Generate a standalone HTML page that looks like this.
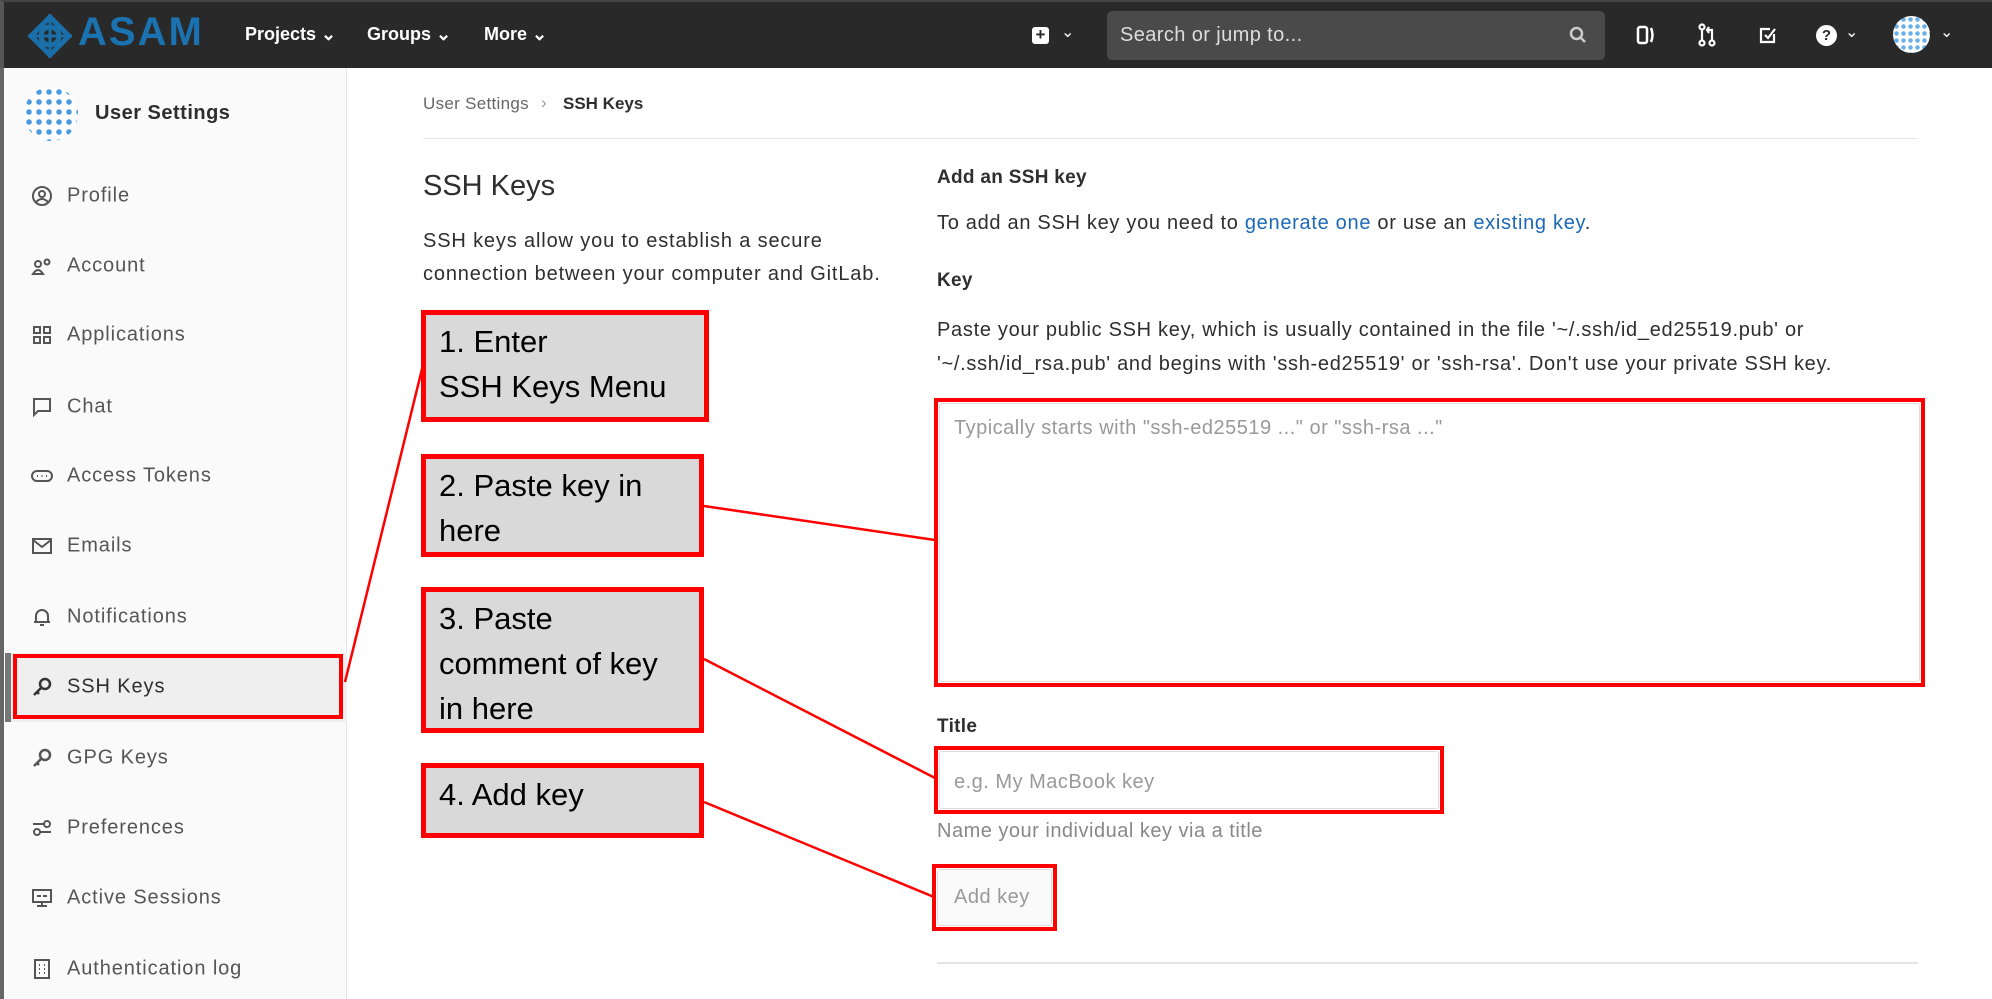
<!DOCTYPE html>
<html><head><meta charset="utf-8"><style>
*{margin:0;padding:0;box-sizing:border-box}
body{width:1992px;height:999px;position:relative;overflow:hidden;background:#fff;font-family:"Liberation Sans",sans-serif;color:#2e2e2e}
.a{position:absolute;white-space:nowrap}
.hdr{position:absolute;left:0;top:0;width:1992px;height:68px;background:#292929;border-left:4px solid #555;border-top:2px solid #444}
.nav{color:#fff;font-size:18px;font-weight:bold;top:24px}
.side{position:absolute;left:0;top:68px;width:347px;height:931px;background:#fafafa;border-right:1px solid #e5e5e5;border-left:4px solid #666}
.it{position:absolute;left:67px;font-size:20px;letter-spacing:0.9px;color:#555;transform:translateY(-50%)}
.ic{position:absolute;left:31px;width:22px;height:22px;transform:translateY(-50%)}
.rb{position:absolute;border:4px solid #f00}
.ann{position:absolute;background:#d9d9d9;border:5px solid #f00;font-size:31px;color:#000;line-height:45px;padding:4px 0 0 13px}
.lab{font-size:19px;font-weight:bold;color:#2e2e2e;letter-spacing:0.3px}
.txt{font-size:20px;letter-spacing:0.7px;color:#2e2e2e}
</style></head><body>
<div class="hdr"></div>
<svg class="a" style="left:28px;top:14px" width="44" height="44" viewBox="0 0 44 44"><g fill="none" stroke="#1a6fa8" stroke-width="5"><path d="M22 3 L41 22 L22 41 L3 22Z"/><circle cx="22" cy="22" r="9"/></g><path d="M22 0v44M0 22h44" stroke="#1a6fa8" stroke-width="3"/></svg>
<div class="a" style="left:78px;top:10px;font-size:40px;font-weight:bold;color:#1b72b0;letter-spacing:2px">ASAM</div>
<div class="a nav" style="left:245px">Projects ⌄</div>
<div class="a nav" style="left:367px">Groups ⌄</div>
<div class="a nav" style="left:484px">More ⌄</div>
<div class="a" style="left:1032px;top:27px;width:17px;height:17px;background:#fff;border-radius:3px;color:#292929;font-weight:bold;font-size:17px;line-height:16px;text-align:center">+</div>
<div class="a" style="left:1061px;top:22px;color:#fff;font-size:16px">⌄</div>
<div class="a" style="left:1107px;top:11px;width:498px;height:49px;background:#4a4a4a;border-radius:5px"></div>
<div class="a" style="left:1120px;top:24px;font-size:20px;letter-spacing:0.4px;color:#ddd">Search or jump to...</div>
<svg class="a" style="left:1569px;top:26px" width="18" height="18" viewBox="0 0 18 18"><circle cx="7.5" cy="7.5" r="5.5" fill="none" stroke="#ccc" stroke-width="2.5"/><path d="M11.5 11.5L16 16" stroke="#ccc" stroke-width="2.5"/></svg>
<svg class="a" style="left:1635px;top:24px" width="22" height="22" viewBox="0 0 22 22" fill="none" stroke="#fff" stroke-width="2.5"><rect x="3" y="3" width="9" height="16" rx="2"/><path d="M16 4q3 7 0 14"/></svg>
<svg class="a" style="left:1696px;top:23px" width="22" height="24" viewBox="0 0 22 24" fill="none" stroke="#fff" stroke-width="2.2"><circle cx="6" cy="4" r="2.5"/><circle cx="6" cy="20" r="2.5"/><circle cx="16" cy="20" r="2.5"/><path d="M6 7v10M16 17V7h-5M13 4l-2 3 2 3"/></svg>
<svg class="a" style="left:1757px;top:24px" width="22" height="22" viewBox="0 0 22 22" fill="none" stroke="#fff" stroke-width="2.2"><path d="M17 10v8H4V5h9"/><path d="M8 11l3 3 7-9"/></svg>
<div class="a" style="left:1816px;top:25px;width:21px;height:21px;border-radius:50%;background:#fff;color:#292929;font-weight:bold;font-size:15px;text-align:center;line-height:21px">?</div>
<div class="a" style="left:1845px;top:22px;color:#fff;font-size:16px">⌄</div>
<div class="a" style="left:1893px;top:16px;width:37px;height:37px;border-radius:50%;background:#fff;background-image:radial-gradient(circle,#6ab0e8 2px,transparent 2.5px);background-size:7px 7px"></div>
<div class="a" style="left:1940px;top:22px;color:#fff;font-size:16px">⌄</div>

<div class="side"></div>
<div class="a" style="left:24px;top:87px;width:54px;height:54px;border-radius:50%;background:#fff;background-image:radial-gradient(circle,#4a9ae0 2.5px,transparent 3px);background-size:10px 10px"></div>
<div class="a" style="left:95px;top:102px;font-size:20px;font-weight:bold;letter-spacing:0.5px;color:#2e2e2e">User Settings</div>

<div class="a" style="left:5px;top:653px;width:342px;height:69px;background:#efefef;border-left:6px solid #777"></div>
<div class="rb" style="left:13px;top:654px;width:330px;height:65px"></div>

<svg class="ic" style="top:196px" viewBox="0 0 22 22" fill="none" stroke="#555" stroke-width="2"><circle cx="11" cy="11" r="9"/><circle cx="11" cy="9" r="3"/><path d="M5 17q6-6 12 0"/></svg>
<div class="it" style="top:196px">Profile</div>
<svg class="ic" style="top:266px" viewBox="0 0 22 22" fill="none" stroke="#555" stroke-width="2"><circle cx="7" cy="9" r="3"/><path d="M2 19q5-8 10 0z"/><circle cx="16" cy="7" r="2.5"/></svg>
<div class="it" style="top:266px">Account</div>
<svg class="ic" style="top:335px" viewBox="0 0 22 22" fill="none" stroke="#555" stroke-width="2"><rect x="3" y="3" width="6" height="6"/><rect x="13" y="3" width="6" height="6"/><rect x="3" y="13" width="6" height="6"/><rect x="13" y="13" width="6" height="6"/></svg>
<div class="it" style="top:335px">Applications</div>
<svg class="ic" style="top:407px" viewBox="0 0 22 22" fill="none" stroke="#555" stroke-width="2"><path d="M3 3h16v12H7l-4 4z"/></svg>
<div class="it" style="top:407px">Chat</div>
<svg class="ic" style="top:476px" viewBox="0 0 22 22" fill="none" stroke="#555" stroke-width="2"><rect x="1" y="6" width="20" height="10" rx="5"/><path d="M6 11h1M10.5 11h1M15 11h1"/></svg>
<div class="it" style="top:476px">Access Tokens</div>
<svg class="ic" style="top:546px" viewBox="0 0 22 22" fill="none" stroke="#555" stroke-width="2"><rect x="2" y="4" width="18" height="14"/><path d="M2 5l9 7 9-7"/></svg>
<div class="it" style="top:546px">Emails</div>
<svg class="ic" style="top:617px" viewBox="0 0 22 22" fill="none" stroke="#555" stroke-width="2"><path d="M5 16V10a6 6 0 0112 0v6zM3 16h16M9 19h4"/></svg>
<div class="it" style="top:617px">Notifications</div>
<svg class="ic" style="top:687px" viewBox="0 0 22 22" fill="none" stroke="#333" stroke-width="2.5"><circle cx="14" cy="8" r="5"/><path d="M10 12l-7 7M6 16l2 2"/></svg>
<div class="it" style="top:687px;color:#2e2e2e">SSH Keys</div>
<svg class="ic" style="top:758px" viewBox="0 0 22 22" fill="none" stroke="#555" stroke-width="2.5"><circle cx="14" cy="8" r="5"/><path d="M10 12l-7 7M6 16l2 2"/></svg>
<div class="it" style="top:758px">GPG Keys</div>
<svg class="ic" style="top:828px" viewBox="0 0 22 22" fill="none" stroke="#555" stroke-width="2"><circle cx="16" cy="7" r="3"/><circle cx="6" cy="15" r="3"/><path d="M2 7h11M9 15h11"/></svg>
<div class="it" style="top:828px">Preferences</div>
<svg class="ic" style="top:898px" viewBox="0 0 22 22" fill="none" stroke="#555" stroke-width="2"><rect x="2" y="3" width="18" height="12"/><path d="M11 15v4M6 19h10M6 9h4M12 9h4"/></svg>
<div class="it" style="top:898px">Active Sessions</div>
<svg class="ic" style="top:969px" viewBox="0 0 22 22" fill="none" stroke="#555" stroke-width="2"><rect x="4" y="2" width="14" height="18"/><path d="M8 7h1M13 7h1M8 11h1M13 11h1M8 15h1M13 15h1"/></svg>
<div class="it" style="top:969px">Authentication log</div>

<div class="a" style="left:423px;top:94px;font-size:17px;letter-spacing:0.3px;color:#666">User Settings</div>
<div class="a" style="left:541px;top:93px;font-size:17px;color:#999">›</div>
<div class="a" style="left:563px;top:94px;font-size:17px;font-weight:bold;color:#2e2e2e">SSH Keys</div>
<div class="a" style="left:423px;top:138px;width:1495px;height:1px;background:#e5e5e5"></div>

<div class="a" style="left:423px;top:170px;font-size:29px;color:#2e2e2e">SSH Keys</div>
<div class="a" style="left:423px;top:225px;line-height:33px;font-size:20px;letter-spacing:0.85px">SSH keys allow you to establish a secure<br>connection between your computer and GitLab.</div>

<div class="a lab" style="left:937px;top:167px">Add an SSH key</div>
<div class="a txt" style="left:937px;top:212px">To add an SSH key you need to <span style="color:#1b69b6">generate one</span> or use an <span style="color:#1b69b6">existing key</span>.</div>
<div class="a lab" style="left:937px;top:270px">Key</div>
<div class="a txt" style="left:937px;top:313px;line-height:34px">Paste your public SSH key, which is usually contained in the file '~/.ssh/id_ed25519.pub' or<br>'~/.ssh/id_rsa.pub' and begins with 'ssh-ed25519' or 'ssh-rsa'. Don't use your private SSH key.</div>
<div class="rb" style="left:934px;top:398px;width:991px;height:289px"></div>
<div class="a" style="left:939px;top:403px;width:981px;height:279px;border:1px solid #ddd;border-radius:3px"></div>
<div class="a" style="left:954px;top:417px;font-size:20px;letter-spacing:0.5px;color:#999">Typically starts with "ssh-ed25519 ..." or "ssh-rsa ..."</div>

<div class="a lab" style="left:937px;top:716px">Title</div>
<div class="rb" style="left:934px;top:746px;width:510px;height:68px"></div>
<div class="a" style="left:939px;top:751px;width:500px;height:58px;border:1px solid #ddd;border-radius:3px"></div>
<div class="a" style="left:954px;top:771px;font-size:20px;letter-spacing:0.5px;color:#999">e.g. My MacBook key</div>
<div class="a" style="left:937px;top:820px;font-size:20px;letter-spacing:0.5px;color:#888">Name your individual key via a title</div>
<div class="rb" style="left:932px;top:864px;width:125px;height:67px"></div>
<div class="a" style="left:937px;top:869px;width:115px;height:57px;border:1px solid #ddd;border-radius:3px;background:#fafafa"></div>
<div class="a" style="left:954px;top:886px;font-size:20px;letter-spacing:0.5px;color:#999">Add key</div>
<div class="a" style="left:937px;top:962px;width:981px;height:2px;background:#e5e5e5"></div>

<div class="ann" style="left:421px;top:310px;width:288px;height:112px">1. Enter<br>SSH Keys Menu</div>
<div class="ann" style="left:421px;top:454px;width:283px;height:103px">2. Paste key in<br>here</div>
<div class="ann" style="left:421px;top:587px;width:283px;height:146px">3. Paste<br>comment of key<br>in here</div>
<div class="ann" style="left:421px;top:763px;width:283px;height:75px">4. Add key</div>

<svg class="a" style="left:0;top:0" width="1992" height="999"><g stroke="#f00" stroke-width="2.5"><line x1="345" y1="682" x2="423" y2="365"/><line x1="704" y1="506" x2="935" y2="540"/><line x1="704" y1="659" x2="935" y2="778"/><line x1="704" y1="802" x2="934" y2="897"/></g></svg>
</body></html>
